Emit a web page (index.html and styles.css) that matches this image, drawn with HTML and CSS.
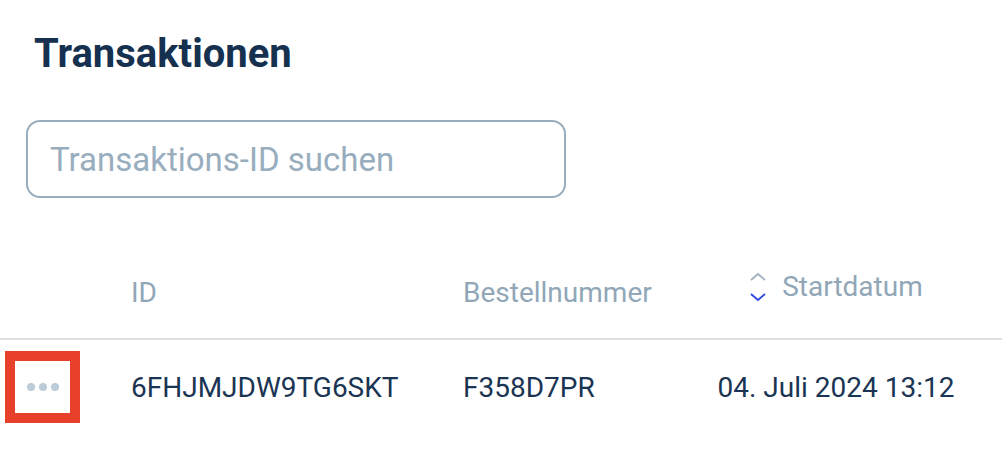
FILE: index.html
```html
<!DOCTYPE html>
<html lang="de">
<head>
    <meta charset="UTF-8">
    <meta name="viewport" content="width=device-width, initial-scale=1.0">
    <title>Transaktionen</title>
    <link rel="stylesheet" href="styles.css">
</head>
<body>

    <h1 class="page-title">Transaktionen</h1>

    <div class="search">
        <input type="text" class="search-input" placeholder="Transaktions-ID suchen">
    </div>

    <div class="table">
        <div class="table-head">
            <div class="cell cell-action"></div>
            <div class="cell head-text">ID</div>
            <div class="cell head-text">Bestellnummer</div>
            <div class="cell cell-date head-sort">
                <svg class="sort-icon" width="18" height="30" viewBox="0 0 18 30">
                    <path d="M2 8 L9 2 L16 8" fill="none" stroke="#9fb1c0" stroke-width="1.8"/>
                    <path d="M2 22 L9 28 L16 22" fill="none" stroke="#2f43e0" stroke-width="1.8"/>
                </svg>
                <span class="head-text">Startdatum</span>
            </div>
        </div>

        <div class="table-row">
            <div class="cell cell-action">
                <button type="button" class="more-btn">
                    <span class="dot"></span>
                    <span class="dot"></span>
                    <span class="dot"></span>
                </button>
            </div>
            <div class="cell">6FHJMJDW9TG6SKT</div>
            <div class="cell">F358D7PR</div>
            <div class="cell cell-date">04. Juli 2024 13:12</div>
        </div>
    </div>

</body>
</html>
```

FILE: styles.css
```css
body {
    font-family: 'Roboto', 'Liberation Sans', sans-serif;
    background-color: #fff;
    color: #1a3553;
    margin: 0;
    padding: 0;
}

.page-title {
    font-size: 40px;
    font-weight: 700;
    line-height: 46px;
    color: #15314f;
    margin: 31px 0 0 34px;
}

.search {
    margin: 43px 0 0 26px;
}

.search-input {
    width: 540px;
    height: 78px;
    box-sizing: border-box;
    border: 2px solid #98adbd;
    border-radius: 14px;
    padding: 0 0 0 22px;
    font-family: inherit;
    font-size: 33px;
    color: #1a3553;
    outline: none;
}

.search-input::placeholder {
    color: #98adbd;
}

.table {
    margin-top: 60px;
}

.table-head,
.table-row {
    display: grid;
    grid-template-columns: 131px 332px 240px 266px;
    font-size: 28px;
    line-height: 33px;
}

.table-head {
    height: 80px;
    border-bottom: 2px solid #e1e1e1;
    align-items: start;
}

.table-head > .head-text {
    padding-top: 18px;
}

.head-text {
    color: #91a7b8;
}

.head-sort {
    display: flex;
    align-items: center;
    justify-content: center;
    gap: 15px;
    padding-top: 12px;
}

.sort-icon {
    display: block;
}

.table-row {
    align-items: center;
    padding: 11px 0;
}

.cell-date {
    text-align: center;
}

.more-btn {
    display: flex;
    align-items: center;
    justify-content: center;
    gap: 4px;
    width: 75px;
    height: 72px;
    margin-left: 5px;
    box-sizing: border-box;
    border: 10px solid #e8412b;
    background-color: #fff;
    padding: 0;
    cursor: pointer;
}

.dot {
    width: 8px;
    height: 8px;
    border-radius: 50%;
    background-color: #bccbd8;
}
```
